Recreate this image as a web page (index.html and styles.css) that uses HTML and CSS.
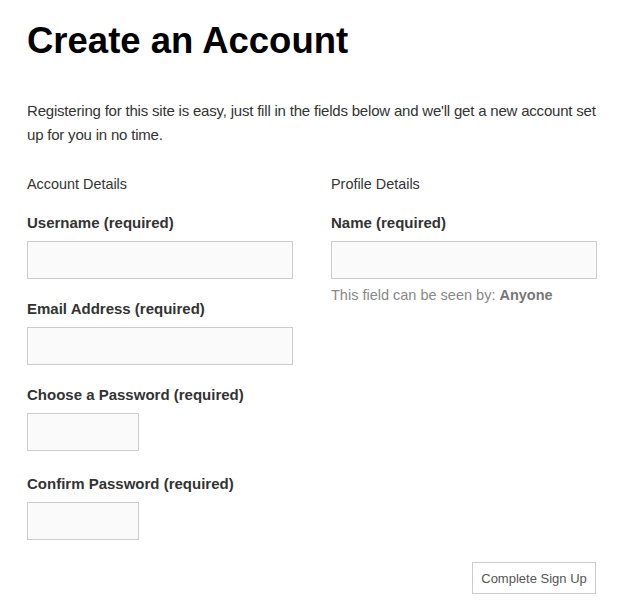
FILE: index.html
```html
<!DOCTYPE html>
<html>
<head>
<meta charset="utf-8">
<link rel="stylesheet" href="styles.css">
</head>
<body>
<div class="page">
  <h1 class="title">Create an Account</h1>
  <p class="intro">Registering for this site is easy, just fill in the fields below and we'll get a new account set up for you in no time.</p>
  <div class="columns">
    <div class="col">
      <h4 class="section">Account Details</h4>
      <label class="label">Username (required)</label>
      <input class="field" type="text">
      <label class="label">Email Address (required)</label>
      <input class="field" type="text">
      <label class="label">Choose a Password (required)</label>
      <input class="field short" type="password">
      <label class="label">Confirm Password (required)</label>
      <input class="field short" type="password">
    </div>
    <div class="col">
      <h4 class="section">Profile Details</h4>
      <label class="label">Name (required)</label>
      <input class="field" type="text">
      <p class="help">This field can be seen by: <strong>Anyone</strong></p>
    </div>
  </div>
  <div class="actions">
    <button class="submit" type="button">Complete Sign Up</button>
  </div>
</div>
</body>
</html>
```
FILE: styles.css
```css
html, body {
  margin: 0;
  padding: 0;
  background: #fff;
}
body {
  font-family: "Liberation Sans", Arial, sans-serif;
  color: #333;
}
.page {
  padding: 19px 30px 0 27px;
}
.title {
  margin: 0;
  font-size: 36.5px;
  line-height: 43px;
  font-weight: bold;
  color: #000;
}
.intro {
  margin: 37px 0 0;
  font-size: 15px;
  letter-spacing: -0.2px;
  line-height: 24px;
  color: #333;
}
.columns {
  display: flex;
  gap: 38px;
  margin-top: 25px;
}
.col {
  width: 266px;
  display: flex;
  flex-direction: column;
  align-items: flex-start;
}
.section {
  margin: 0 0 15px;
  font-size: 14.4px;
  font-weight: normal;
  line-height: 24px;
  color: #333;
}
.label {
  display: block;
  margin: 0;
  font-size: 15px;
  font-weight: bold;
  line-height: 24px;
  color: #333;
}
.field {
  box-sizing: border-box;
  margin: 6px 0 18px;
  width: 266px;
  height: 38px;
  border: 1px solid #ccc;
  background: #fafafa;
  padding: 0 8px;
  font: inherit;
}
.field.short {
  width: 112px;
  margin-bottom: 21px;
}
.help {
  margin: -14px 0 0;
  font-size: 14.5px;
  line-height: 24px;
  color: #888;
}
.help strong {
  color: #777;
}
.actions {
  display: flex;
  justify-content: flex-end;
  margin-top: 1px;
  padding-right: 1px;
}
.submit {
  box-sizing: border-box;
  width: 124px;
  height: 32px;
  border: 1px solid #ccc;
  background: #fff;
  color: #555;
  font-family: "Liberation Sans", Arial, sans-serif;
  font-size: 13px;
  padding: 0;
}
```
